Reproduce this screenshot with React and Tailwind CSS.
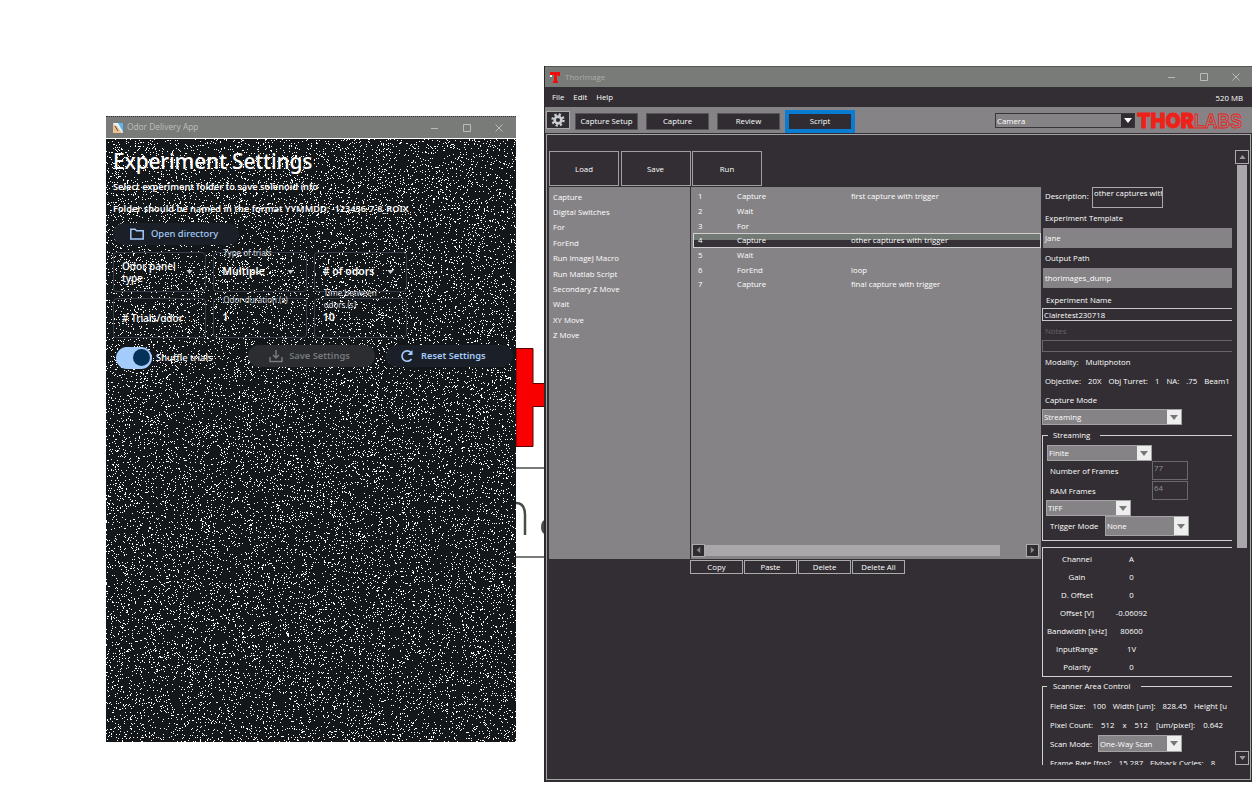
import React from "react";

const commands = ["Capture", "Digital Switches", "For", "ForEnd", "Run ImageJ Macro", "Run Matlab Script", "Secondary Z Move", "Wait", "XY Move", "Z Move"];
const steps = [
  ["1", "Capture", "first capture with trigger"],
  ["2", "Wait", ""],
  ["3", "For", ""],
  ["4", "Capture", "other captures with trigger"],
  ["5", "Wait", ""],
  ["6", "ForEnd", "loop"],
  ["7", "Capture", "final capture with trigger"],
];
const channel = [["Channel", "A"], ["Gain", "0"], ["D. Offset", "0"], ["Offset [V]", "-0.06092"], ["Bandwidth [kHz]", "80600"], ["InputRange", "1V"], ["Polarity", "0"]];

function speckles(width, height, count) {
  let seed = 48271;
  const next = (size) => {
    seed = (seed * 16807) % 2147483647;
    return seed % size;
  };
  let d = "";
  for (let i = 0; i < count; i++) d += `M${next(width)} ${next(height) + 0.5}h1`;
  return d;
}
const specklePath = speckles(410, 603, 22000);

function WindowButtons({ className }) {
  return (
    <svg className={className} viewBox="0 0 76 10" fill="none" stroke="#b9bcb9" strokeWidth="1">
      <path d="M1 5.500h7M33.500 1.500h7v7h-7zM65.500 1.500l7 7M72.500 1.500l-7 7" />
    </svg>
  );
}

function Caret({ className }) {
  return (
    <svg className={className} viewBox="0 0 8 5" fill="currentColor">
      <path d="M0 0h8L4 5z" />
    </svg>
  );
}

function Combo({ className, children }) {
  return (
    <div className={"flex shrink-0 border border-[#a5a2a5] bg-[#868386] text-white " + className}>
      <span className="flex flex-1 items-center whitespace-nowrap pl-px">{children}</span>
      <span className="flex w-[14px] items-center justify-center bg-[#eeeeee] text-[#777]">
        <Caret className="h-[5px] w-2" />
      </span>
    </div>
  );
}

function Line({ className, children }) {
  return <div className={"flex shrink-0 items-center whitespace-pre " + className}>{children}</div>;
}

function Outlined({ label, value, caret, strong, labelClass = "" }) {
  return (
    <div className="relative flex items-center justify-between rounded-sm border border-[#38404b] px-2">
      {label && <span className={"absolute left-[7px] px-0.5 text-[8px] leading-[12px] text-[#d4d8de] " + labelClass}>{label}</span>}
      <span className={strong ? "text-[10.500px] font-semibold" : value.length < 3 ? "text-[10.500px] font-semibold" : "text-[10px] font-medium leading-[12px]"}>{value}</span>
      {caret && <Caret className="mr-1 h-[4px] w-[7px] shrink-0 text-[#c8ccd4]" />}
    </div>
  );
}

function OdorApp() {
  return (
    <section className="absolute left-[106px] top-[116px] flex h-[626px] w-[410px] flex-col bg-[#13171a] font-['Noto_Sans',sans-serif] text-white">
      <header className="flex h-[22px] shrink-0 items-center border-t border-dotted border-[#333] bg-[#787b78] pl-[7px] pr-[10px] text-[8.300px] text-[#b8bbb8]">
        <svg className="mr-1 h-[10px] w-[10px]" viewBox="0 0 10 10">
          <rect width="10" height="10" rx="1" fill="#e8f2fa" />
          <path d="M5 0h5v9z" fill="#5fb5ec" />
          <path d="M0 1l4 2 5 7H0z" fill="#efc28d" />
          <path d="M2 3l3 5" stroke="#4c4a55" />
        </svg>
        Odor Delivery App
        <WindowButtons className="ml-auto h-[10px] w-[76px]" />
      </header>
      <div className="relative flex flex-1 flex-col overflow-hidden border-t border-white">
        <svg className="absolute inset-0 h-[603px] w-[410px]" viewBox="0 0 410 603" shapeRendering="crispEdges">
          <path d={specklePath} stroke="#ffffff" strokeWidth="1" />
        </svg>
        <div className="relative flex flex-col pl-[7px]">
          <h1 className="mt-[6px] h-[32px] whitespace-nowrap text-[20.900px] font-medium leading-[32px] tracking-[-0.15px]">Experiment Settings</h1>
          <p className="mt-[3px] h-[14px] whitespace-nowrap text-[9.200px] font-semibold leading-[14px]">Select experiment folder to save solenoid info</p>
          <p className="mt-[8px] h-[14px] whitespace-nowrap text-[9.200px] font-semibold leading-[14px]">Folder should be named in the format YYMMDD: -123456-7-8_ROIX</p>
          <button className="mt-[7px] flex h-[22px] w-[126px] items-center gap-[7px] rounded-full bg-[#1b1f27] pl-[17px] text-[9.400px] font-medium text-[#a3cbfb]">
            <svg className="h-3 w-[14px]" viewBox="0 0 14 12" fill="none" stroke="currentColor" strokeWidth="1.500">
              <path d="M.8 10.900V1.200H5l1.500 1.500h6.700v8.200z" />
            </svg>
            Open directory
          </button>
          <div className="mt-[7px] grid w-[294px] grid-cols-3 grid-rows-[40px_40px] gap-x-[7px] gap-y-[6px]">
            <Outlined value={<>Odor panel<br />type</>} caret />
            <Outlined label="Type of trials" labelClass="-top-[6px]" value="Multiple" strong caret />
            <Outlined value="# of odors" strong caret />
            <Outlined value="# Trials/odor" />
            <Outlined label="Odor duration (s)" labelClass="-top-[5px] whitespace-nowrap" value="1" />
            <Outlined label={<>Time between<br />odors (s)</>} labelClass="-top-[12px] whitespace-nowrap" value="10" />
          </div>
          <div className="mt-[6px] flex h-[24px] items-center">
            <div className="ml-[3px] mt-[3px] flex h-[22px] w-[36px] items-center justify-end rounded-full bg-[#a3cbfb] pr-[2px]">
              <span className="h-[17px] w-[17px] rounded-full bg-[#053258]" />
            </div>
            <span className="ml-1 mt-[4px] w-[92px] text-[9.400px] font-medium">Shuffle trials</span>
            <button className="flex h-[22px] w-[127px] items-center justify-center gap-[6px] rounded-full bg-[#2b2d30] pr-[4px] text-[9.300px] font-semibold text-[#77797c]">
              <svg className="h-[14px] w-[14px]" viewBox="0 0 14 14" fill="none" stroke="currentColor" strokeWidth="1.500">
                <path d="M7 1v8M4 6l3 3 3-3M1 8v4.500h12V8" />
              </svg>
              Save Settings
            </button>
            <button className="ml-[11px] flex h-[22px] w-[127px] items-center gap-[7px] rounded-full bg-[#1b1f27] pl-[14px] text-[9.300px] font-semibold text-[#a3cbfb]">
              <svg className="h-[14px] w-[14px]" viewBox="0 0 14 14" fill="none" stroke="currentColor" strokeWidth="1.700">
                <path d="M11.500 10A5.200 5.200 0 1 1 11 3.500" />
                <path d="M12.500 1v5h-5z" fill="currentColor" stroke="none" />
              </svg>
              Reset Settings
            </button>
          </div>
        </div>
      </div>
    </section>
  );
}

function Details() {
  return (
    <aside className="ml-px mt-[52px] flex h-[578px] w-[190px] shrink-0 flex-col overflow-hidden">
      <div className="flex h-[21px] shrink-0">
        <Line className="h-[18px] w-[50px] pl-[3px]">Description:</Line>
        <span className="w-[71px] overflow-hidden whitespace-nowrap border border-[#aaa] pl-px leading-[11px]">other captures with</span>
      </div>
      <Line className="h-[19px] pl-[3px]">Experiment Template</Line>
      <Line className="ml-px mt-px h-[20px] bg-[#868386] pl-[2px]">Jane</Line>
      <Line className="h-[20px] pl-[3px]">Output Path</Line>
      <Line className="ml-px h-[20px] bg-[#868386] pl-[2px]">thorimages_dump</Line>
      <Line className="h-[20px] pl-[4px] pt-[3px]">Experiment Name</Line>
      <Line className="h-[13px] border border-r-0 border-[#c8c8c8] pl-px">Clairetest230718</Line>
      <Line className="h-[19px] pl-[3px] text-[#68656a]">Notes</Line>
      <div className="h-[12px] shrink-0 border border-r-0 border-[#68656a]" />
      <Line className="h-[20px] gap-[7px] pl-[3px]"><span>Modality:</span><span>Multiphoton</span></Line>
      <Line className="h-[18px] gap-[7px] pl-[3px]"><span>Objective:</span><span>20X</span><span>Obj Turret:</span><span>1</span><span>NA:</span><span>.75</span><span>Beam1</span></Line>
      <Line className="h-[19px] pl-[3px]">Capture Mode</Line>
      <Combo className="h-[16px] w-[140px]">Streaming</Combo>
      <fieldset className="relative mt-[10px] flex h-[106px] shrink-0 flex-col border border-r-0 border-[#d2d2d2] pl-[4px] pt-[9px]">
        <span className="absolute left-[5px] top-[-7px] w-[52px] bg-[#322e33] pl-[5px] leading-[12px]">Streaming</span>
        <Combo className="h-[16px] w-[105px]">Finite</Combo>
        <div className="flex h-[20px] shrink-0">
          <Line className="w-[105px] pl-[3px]">Number of Frames</Line>
          <span className="h-[19px] w-[36px] border border-[#6b686c] pl-px leading-[13px] text-[#929094]">77</span>
        </div>
        <div className="flex h-[19px] shrink-0">
          <Line className="w-[105px] pl-[3px]">RAM Frames</Line>
          <span className="h-[19px] w-[36px] border border-[#6b686c] pl-px leading-[12px] text-[#929094]">64</span>
        </div>
        <Combo className="-ml-px h-[16px] w-[85px]">TIFF</Combo>
        <div className="flex h-[20px] shrink-0">
          <Line className="w-[58px] pl-[3px]">Trigger Mode</Line>
          <Combo className="h-[20px] w-[84px]">None</Combo>
        </div>
      </fieldset>
      <div className="mt-[6px] flex h-[130px] shrink-0 flex-col border border-r-0 border-[#d2d2d2] pt-[2px]">
        {channel.map(([name, value]) => (
          <div key={name} className="flex h-[18.100px] items-center whitespace-nowrap text-center">
            <span className="w-[68px]">{name}</span>
            <span className="w-[41px]">{value}</span>
          </div>
        ))}
      </div>
      <div className="relative mt-[9px] flex h-[110px] shrink-0 flex-col border border-b-0 border-r-0 border-[#d2d2d2] pl-[7px] pt-[9px]">
        <span className="absolute left-[4px] top-[-7px] w-[94px] bg-[#322e33] pl-[6px] leading-[12px]">Scanner Area Control</span>
        <Line className="h-[19.500px] gap-[7px]"><span>Field Size:</span><span>100</span><span>Width [um]:</span><span>828.45</span><span>Height [u</span></Line>
        <Line className="h-[19.500px] gap-[8px]"><span>Pixel Count:</span><span>512</span><span>x</span><span>512</span><span>[um/pixel]:</span><span>0.642</span></Line>
        <div className="flex h-[18px] shrink-0">
          <Line className="w-[48px]">Scan Mode:</Line>
          <Combo className="h-[17px] w-[84px]">One-Way Scan</Combo>
        </div>
        <Line className="h-[19.500px] gap-[7px]"><span>Frame Rate [fps]:</span><span>15.287</span><span>Flyback Cycles:</span><span>8</span></Line>
      </div>
    </aside>
  );
}

function ThorImage() {
  const navButton = "flex h-[17px] w-[63px] items-center justify-center border border-[#555] bg-[#302c31]";
  const bigButton = "flex h-[35px] w-[70px] items-center justify-center border border-[#a0a0a0]";
  return (
    <section className="absolute left-[544px] top-[66px] flex h-[716px] w-[708px] flex-col border-l border-dotted border-[#222] bg-[#322e33] font-['Open_Sans',sans-serif] text-[7.800px] font-medium leading-[12px] text-white">
      <header className="flex h-[21px] shrink-0 items-center border-t border-[#555] bg-[#787b78] pl-[5px] pr-[9px] text-[8px] font-normal text-[#aaadaa]">
        <svg className="mr-[5px] h-[11px] w-[10px]" viewBox="0 0 10 11">
          <path d="M0 0h10v4H8V3H7v6h1v2H3V9h1V3H2v2H0z" fill="#f20d0d" />
          <path d="M0 3h2v2H0z" fill="#eee" />
        </svg>
        ThorImage
        <WindowButtons className="ml-auto h-[10px] w-[76px]" />
      </header>
      <nav className="flex h-[20px] shrink-0 items-center gap-[9px] pl-[7px] pr-[9px]">
        <span>File</span><span>Edit</span><span>Help</span>
        <span className="ml-auto pt-[2px]">520 MB</span>
      </nav>
      <div className="flex h-[26px] shrink-0 items-center bg-[#868386] pl-px">
        <button className="flex h-[18px] w-[24px] items-center justify-center border border-[#aaa] bg-[#302c31]">
          <svg className="h-[14px] w-[14px]" viewBox="0 0 14 14" fill="none" stroke="#c9cfd2">
            <circle cx="7" cy="7" r="3.400" strokeWidth="2.600" />
            <circle cx="7" cy="7" r="5.500" strokeWidth="2.400" strokeDasharray="2.160 2.160" />
          </svg>
        </button>
        <button className={navButton + " ml-[5px] mt-[2px]"}>Capture Setup</button>
        <button className={navButton + " ml-[8px] mt-[2px]"}>Capture</button>
        <button className={navButton + " ml-[8px] mt-[2px]"}>Review</button>
        <button className="ml-[5px] mt-[2px] flex h-[23px] w-[70px] items-center justify-center border-[4px] border-[#087bd2] bg-[#302c31]">Script</button>
        <div className="ml-auto mt-px flex h-[15px] w-[140px] border border-[#39363a]">
          <span className="flex flex-1 items-center pl-px">Camera</span>
          <span className="flex w-[13px] items-center justify-center bg-[#302c31]"><Caret className="h-[5px] w-2" /></span>
        </div>
        <svg className="ml-[2px] mr-[9px] h-[26px] w-[106px] overflow-visible" viewBox="0 0 106 26">
          <text x="0" y="20.500" fontSize="20.500" fontWeight="900" fontFamily="Inter, Liberation Sans, sans-serif" textLength="57" lengthAdjust="spacingAndGlyphs" fill="#ee2118" stroke="#ee2118" strokeWidth=".8">THOR</text>
          <text x="57" y="20.500" fontSize="20.500" fontWeight="700" fontFamily="Liberation Sans, sans-serif" textLength="48" lengthAdjust="spacingAndGlyphs" fill="none" stroke="#ee2118" strokeWidth=".9">LABS</text>
        </svg>
      </div>
      <main className="mx-px mb-[2px] mt-px flex h-[646px] border border-[#a5a5a5] pl-[2px] pr-px">
        <div className="flex w-[492px] shrink-0 flex-col pt-[16px]">
          <div className="flex gap-[1.500px]">
            <button className={bigButton}>Load</button>
            <button className={bigButton}>Save</button>
            <button className={bigButton}>Run</button>
          </div>
          <div className="mt-px flex h-[372px] shrink-0 gap-px">
            <ul className="w-[141px] bg-[#868386] pl-[4px] pt-[2px]">
              {commands.map((name) => <li key={name} className="flex h-[15.400px] items-center">{name}</li>)}
            </ul>
            <div className="flex flex-1 flex-col bg-[#868386] pt-[2px]">
              {steps.map(([number, name, note]) => (
                <div key={number} className={"ml-[2px] flex h-[14.700px] items-center border " + (number === "4" ? "border-[#d0d0d0] bg-linear-to-b from-[#737a75] from-45% to-[#353136] to-50%" : "border-transparent")}>
                  <span className="w-[43px] pl-1">{number}</span>
                  <span className="w-[114px]">{name}</span>
                  <span>{note}</span>
                </div>
              ))}
              <div className="mb-[2px] mt-auto flex h-[14px] items-center">
                <span className="ml-px flex h-[13px] w-[13px] items-center justify-center border border-[#aaa] bg-[#302c31]"><Caret className="h-[4px] w-[7px] rotate-90 text-[#888]" /></span>
                <span className="h-[11px] w-[295px] bg-[#aaa7aa]" />
                <span className="ml-auto mr-[2px] flex h-[13px] w-[13px] items-center justify-center border border-[#aaa] bg-[#302c31]"><Caret className="h-[4px] w-[7px] -rotate-90 text-[#888]" /></span>
              </div>
            </div>
          </div>
          <div className="ml-[141px] mt-px flex gap-px">
            {["Copy", "Paste", "Delete", "Delete All"].map((name) => (
              <button key={name} className="flex h-[14px] w-[53px] items-center justify-center border border-[#aaa]">{name}</button>
            ))}
          </div>
        </div>
        <Details />
        <div className="ml-auto mt-[15px] flex h-[615px] w-[14px] flex-col items-center">
          <span className="flex h-[14px] w-[14px] items-center justify-center border border-[#aaa]"><Caret className="h-[4px] w-[7px] rotate-180 text-[#999]" /></span>
          <span className="mt-px h-[383px] w-[10px] bg-[#aaa7aa]" />
          <span className="mt-auto flex h-[14px] w-[14px] items-center justify-center border border-[#aaa]"><Caret className="h-[4px] w-[7px] text-[#999]" /></span>
        </div>
      </main>
    </section>
  );
}

export default function App() {
  return (
    <div className="relative h-[790px] w-[1258px] overflow-hidden bg-white">
      <svg className="absolute left-[516px] top-[340px] h-[230px] w-[29px]" viewBox="0 0 29 230" fill="none">
        <path d="M0 8.500h17v35h12v23H17v40H0z" fill="#f90000" stroke="#5a0000" />
        <path d="M0 128h29M0 217h29" stroke="#4d504d" strokeWidth="1.500" />
        <path d="M0 163q9 0 9 12v20" stroke="#4a4c4a" strokeWidth="2.500" />
        <ellipse cx="29" cy="187" rx="4" ry="7" fill="#4a4c4a" />
      </svg>
      <OdorApp />
      <ThorImage />
    </div>
  );
}
